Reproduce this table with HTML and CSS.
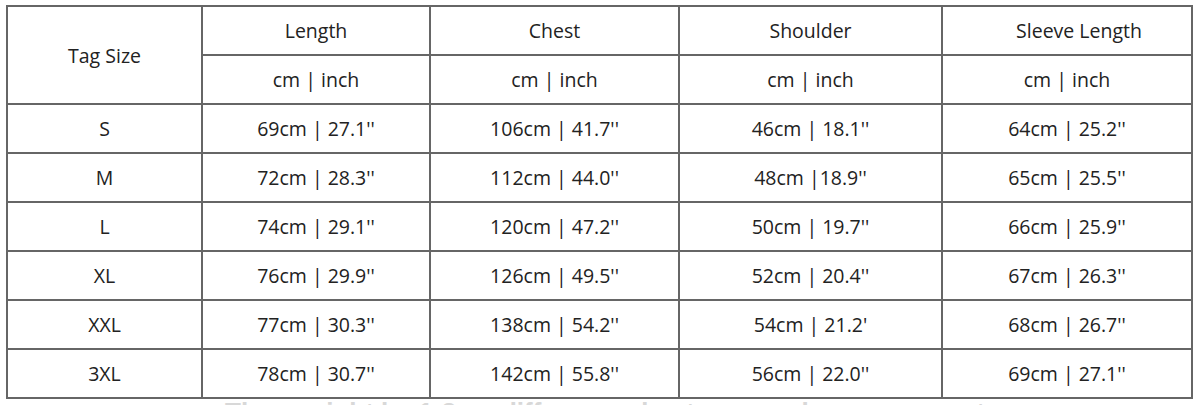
FILE: index.html
```html
<!DOCTYPE html>
<html>
<head>
<meta charset="utf-8">
<link rel="stylesheet" href="styles.css">
</head>
<body>
<div class="page">
  <table class="size-table">
    <colgroup>
      <col class="c-tag">
      <col class="c-len">
      <col class="c-chest">
      <col class="c-shoulder">
      <col class="c-sleeve">
    </colgroup>
    <thead>
      <tr>
        <th rowspan="2">Tag Size</th>
        <th>Length</th>
        <th>Chest</th>
        <th>Shoulder</th>
        <th class="shifted">Sleeve Length</th>
      </tr>
      <tr>
        <th>cm | inch</th>
        <th>cm | inch</th>
        <th>cm | inch</th>
        <th>cm | inch</th>
      </tr>
    </thead>
    <tbody>
      <tr><td>S</td><td>69cm | 27.1''</td><td>106cm | 41.7''</td><td>46cm | 18.1''</td><td>64cm | 25.2''</td></tr>
      <tr><td>M</td><td>72cm | 28.3''</td><td>112cm | 44.0''</td><td>48cm |18.9''</td><td>65cm | 25.5''</td></tr>
      <tr><td>L</td><td>74cm | 29.1''</td><td>120cm | 47.2''</td><td>50cm | 19.7''</td><td>66cm | 25.9''</td></tr>
      <tr><td>XL</td><td>76cm | 29.9''</td><td>126cm | 49.5''</td><td>52cm | 20.4''</td><td>67cm | 26.3''</td></tr>
      <tr><td>XXL</td><td>77cm | 30.3''</td><td>138cm | 54.2''</td><td>54cm | 21.2'</td><td>68cm | 26.7''</td></tr>
      <tr><td>3XL</td><td>78cm | 30.7''</td><td>142cm | 55.8''</td><td>56cm | 22.0''</td><td>69cm | 27.1''</td></tr>
    </tbody>
  </table>
  <p class="note">There might be 1-3cm difference due to manual measurement.</p>
</div>
</body>
</html>
```

FILE: styles.css
```css
html, body {
  margin: 0;
  padding: 0;
  background: #ffffff;
}

.page {
  padding: 5px 0 0 6px;
  font-family: "Open Sans", "Liberation Sans", sans-serif;
  color: #222222;
}

.size-table {
  width: 1185px;
  border-collapse: collapse;
  table-layout: fixed;
  border: 2px solid #666666;
}

.c-tag { width: 195px; }
.c-len { width: 228px; }
.c-chest { width: 249px; }
.c-shoulder { width: 263px; }
.c-sleeve { width: 250px; }

.size-table th,
.size-table td {
  border: 2px solid #666666;
  height: 47px;
  padding: 0;
  text-align: center;
  vertical-align: middle;
  font-size: 19.5px;
  font-weight: 400;
  line-height: 26px;
  color: #222222;
}

.size-table th[rowspan] {
  padding-top: 2px;
}

.size-table th.shifted {
  padding-left: 24px;
}

.note {
  margin: -2px 0 0 219px;
  font-family: "Liberation Sans", Arial, sans-serif;
  font-weight: 700;
  font-size: 26px;
  line-height: 30px;
  color: #d8d8d8;
  white-space: nowrap;
}
```
